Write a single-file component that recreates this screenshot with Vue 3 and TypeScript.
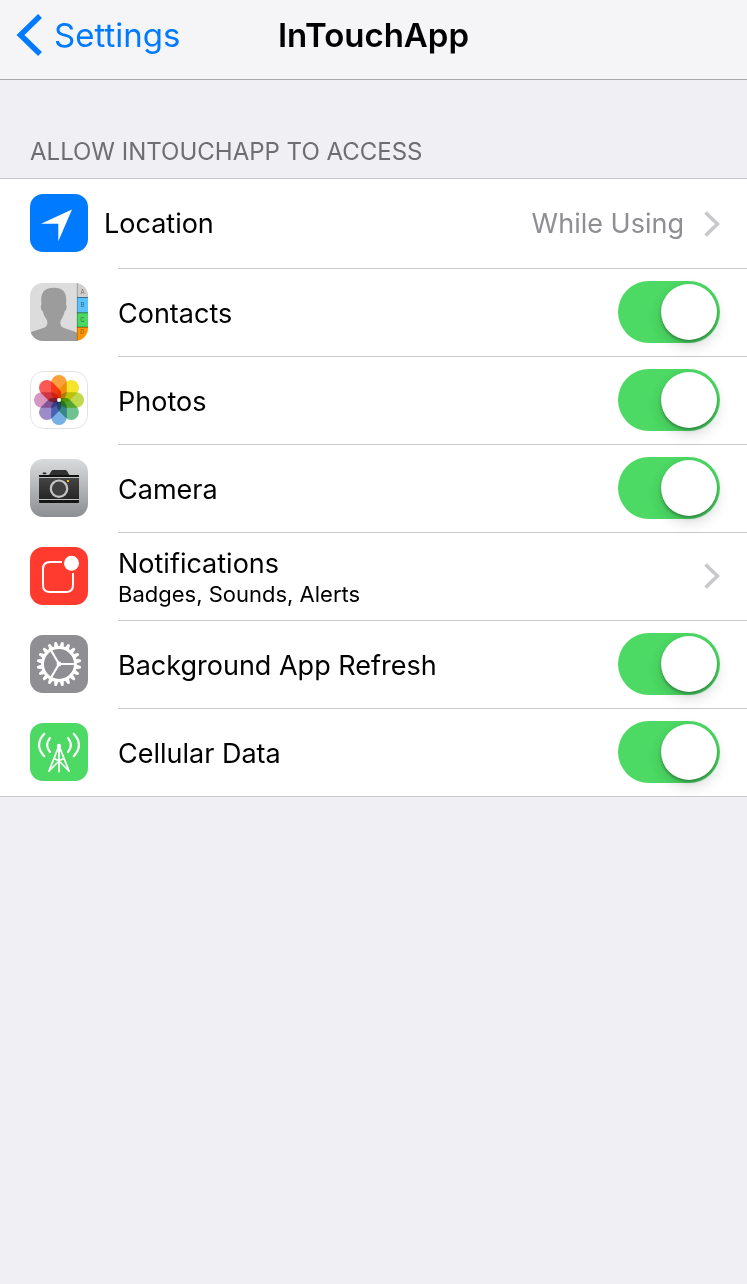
<script setup lang="ts">
import { reactive } from 'vue'

type IconName = 'location' | 'contacts' | 'photos' | 'camera' | 'notifications' | 'refresh' | 'cellular'

interface Row {
  id: IconName
  label: string
  kind: 'link' | 'toggle'
  detail?: string
  value?: string
  on?: boolean
}

const rows = reactive<Row[]>([
  { id: 'location', label: 'Location', kind: 'link', value: 'While Using' },
  { id: 'contacts', label: 'Contacts', kind: 'toggle', on: true },
  { id: 'photos', label: 'Photos', kind: 'toggle', on: true },
  { id: 'camera', label: 'Camera', kind: 'toggle', on: true },
  { id: 'notifications', label: 'Notifications', kind: 'link', detail: 'Badges, Sounds, Alerts' },
  { id: 'refresh', label: 'Background App Refresh', kind: 'toggle', on: true },
  { id: 'cellular', label: 'Cellular Data', kind: 'toggle', on: true },
])

const petals: string[] = ['#fba03c', '#f4e52a', '#bfd94e', '#6fc391', '#76b0e4', '#9c8cc8', '#d596c2', '#fb5a54']
const teeth: number[] = Array.from({ length: 20 }, (_, i) => i * 18 + 9)
</script>

<template>
  <div class="screen">
    <header class="nav">
      <a class="back" href="#settings">
        <svg class="back-arrow" viewBox="0 0 26 42" aria-hidden="true">
          <path d="M24 2 4.500 21 24 40" fill="none" stroke="currentColor" stroke-width="5.500" />
        </svg>
        <span>Settings</span>
      </a>
      <h1 class="title">InTouchApp</h1>
    </header>

    <main>
      <h2 class="section-title">ALLOW INTOUCHAPP TO ACCESS</h2>
      <ul class="list">
        <li v-for="row in rows" :key="row.id" class="row" :class="[row.id, row.kind]">
          <component
            :is="row.kind === 'link' ? 'a' : 'label'"
            class="row-inner"
            :href="row.kind === 'link' ? '#' + row.id : undefined"
            :for="row.kind === 'toggle' ? 'switch-' + row.id : undefined"
          >
            <svg class="icon" viewBox="0 0 58 58" aria-hidden="true">
              <g v-if="row.id === 'location'">
                <rect width="58" height="58" fill="#007aff" />
                <path d="M42 15.500 11 29.800H28.300V47.300Z" fill="#fff" />
              </g>

              <g v-else-if="row.id === 'contacts'">
                <rect width="58" height="58" fill="#dcdcdc" />
                <path
                  d="M0 58V50C3 47.500 13 46 16 43.500 18 41.500 17.800 38 16 35.500 14 33 13.500 31 13 28.500 11 27.500 10.200 23 11.500 21.500 10 10 14 4.700 23.800 4.700S37.500 10 36 21.500C37.300 23 36.500 27.500 34.500 28.500 34 31 33.500 33 31.800 35.500 30 38 29.800 41.500 31.500 43.500 34.500 46 44 47.500 47 50V58Z"
                  fill="#9c9c9c"
                />
                <rect x="47" width="11" height="14" fill="#d0cfcd" />
                <rect x="47" y="14" width="11" height="16" fill="#5ac1fa" />
                <rect x="47" y="29.500" width="11" height="15" fill="#4cd664" />
                <rect x="47" y="44" width="11" height="14" fill="#ff9500" />
                <path d="M47 14.500H58M47 29.800H58M47 44.200H58" stroke="#000" stroke-opacity=".4" />
                <path d="M47.300 0V58" stroke="#000" stroke-opacity=".25" />
                <g class="tab-letters">
                  <text x="52.500" y="11">A</text>
                  <text x="52.500" y="24">B</text>
                  <text x="52.500" y="39">C</text>
                  <text x="52.500" y="51">D</text>
                </g>
              </g>

              <g v-else-if="row.id === 'photos'">
                <rect width="58" height="58" fill="#fff" />
                <g class="flower">
                  <rect
                    v-for="(color, i) in petals"
                    :key="color"
                    class="petal"
                    x="21.200"
                    y="4"
                    width="15.600"
                    height="25"
                    rx="7.800"
                    :fill="color"
                    :transform="`rotate(${i * 45} 29 29)`"
                  />
                </g>
                <circle cx="29" cy="29" r="2" fill="#fff" />
                <rect x=".5" y=".5" width="57" height="57" rx="13" fill="none" stroke="#e2e2e2" />
              </g>

              <g v-else-if="row.id === 'camera'">
                <defs>
                  <linearGradient id="camera-back" x1="0" y1="0" x2="0" y2="1">
                    <stop offset="0" stop-color="#dadbdc" />
                    <stop offset="1" stop-color="#8c8e93" />
                  </linearGradient>
                  <linearGradient id="camera-body" x1="0" y1="0" x2="0" y2="1">
                    <stop offset="0" stop-color="#444" />
                    <stop offset="1" stop-color="#262626" />
                  </linearGradient>
                </defs>
                <rect width="58" height="58" fill="url(#camera-back)" />
                <path d="M9 18V17Q9 16 10 16H18.500C20.500 15.500 20.500 11.500 23 11H35.500C38 11.500 38 15.500 40 16H48Q49 16 49 17V18Z" fill="#303030" />
                <path d="M13 14.700V14H16V14.700Z" fill="#222" stroke="#222" />
                <rect x="9" y="16" width="40" height="2" fill="#111" />
                <rect x="9" y="19" width="40" height="21" fill="url(#camera-body)" />
                <path d="M9 18.500H49M9 40.500H49" stroke="#c4c6c6" />
                <path d="M9 41H49V43Q49 44 48 44H10Q9 44 9 43Z" fill="#161616" />
                <circle cx="29" cy="29.700" r="8.200" fill="#404040" stroke="#c4c5c7" stroke-width="2.200" />
                <rect x="37" y="21" width="2" height="2" fill="#f4b90c" />
              </g>

              <g v-else-if="row.id === 'notifications'">
                <rect width="58" height="58" fill="#ff3b30" />
                <path d="M32 15H20Q13 15 13 22V38Q13 45 20 45H36Q43 45 43 38V26" fill="none" stroke="#fff" stroke-width="2" />
                <circle cx="41.500" cy="16.300" r="7.500" fill="#fff" />
              </g>

              <g v-else-if="row.id === 'refresh'">
                <rect width="58" height="58" fill="#8e8e93" />
                <path
                  v-for="angle in teeth"
                  :key="angle"
                  d="M45.500 26.600 50.600 27.700Q51.300 28 51.300 29T50.600 30.300L45.500 31.400Z"
                  fill="#fff"
                  :transform="`rotate(${angle} 29 29)`"
                />
                <circle cx="29" cy="29" r="16.500" fill="none" stroke="#fff" stroke-width="3" />
                <path d="M29 29H45.500M29 29 20.700 14.700M29 29 20.700 43.300" stroke="#fff" stroke-width="2.200" />
                <circle cx="29" cy="29" r="2.400" fill="#fff" />
              </g>

              <g v-else>
                <rect width="58" height="58" fill="#4cd964" />
                <g fill="none" stroke="#fff" stroke-linecap="round" stroke-linejoin="round">
                  <path
                    d="M14.300 10.800Q3.800 22 14.300 33.200M43.700 10.800Q54.200 22 43.700 33.200M20 15Q14.200 22 20 29M38 15Q43.800 22 38 29"
                    stroke-width="2.200"
                  />
                  <path d="M28.500 24 19 48M29.500 24 39 48M29 24V48.500" stroke-width="1.800" />
                  <path d="M24.500 35.500 29 38 39 48M33.500 35.500 29 38 19 48" stroke-width="1.500" />
                </g>
                <circle cx="29" cy="23" r="2.200" fill="#fff" />
              </g>
            </svg>

            <span class="body">
              <span class="text">
                <span class="label">{{ row.label }}</span>
                <span v-if="row.detail" class="detail">{{ row.detail }}</span>
              </span>
              <span v-if="row.value" class="value">{{ row.value }}</span>
              <svg v-if="row.kind === 'link'" class="chevron" viewBox="0 0 16 26" aria-hidden="true">
                <path d="M1.500 1.500 13.500 13 1.500 24.500" fill="none" stroke="#c7c7cc" stroke-width="3.500" />
              </svg>
              <input v-else :id="'switch-' + row.id" v-model="row.on" class="switch" type="checkbox" role="switch" />
            </span>
          </component>
        </li>
      </ul>
    </main>
  </div>
</template>

<style>
body {
  margin: 0;
  background: #efeff4;
}
</style>

<style scoped>
.screen {
  min-height: 100vh;
  background: #efeff4;
  color: #000;
  font-family: Inter, Roboto, "Liberation Sans", sans-serif;
}

.nav {
  display: grid;
  grid-template-columns: 1fr auto 1fr;
  align-items: center;
  box-sizing: border-box;
  height: 80px;
  padding: 0 16px 10px;
  border-bottom: 1px solid #a7a7aa;
  background: #f5f5f8;
}

.back {
  display: flex;
  align-items: center;
  gap: 12px;
  color: #007aff;
  font-size: 33px;
  line-height: 40px;
  text-decoration: none;
}

.back-arrow {
  width: 26px;
  height: 42px;
}

.title {
  margin: 0;
  font-size: 33px;
  font-weight: 600;
  line-height: 40px;
}

.section-title {
  margin: 0;
  padding: 56px 30px 10px;
  color: #6d6d72;
  font-size: 24px;
  font-weight: 400;
  line-height: 32px;
}

.list {
  margin: 0;
  padding: 0;
  border-top: 1px solid #c8c7cc;
  border-bottom: 1px solid #c8c7cc;
  background: #fff;
  list-style: none;
}

.row-inner {
  display: flex;
  align-items: stretch;
  gap: 30px;
  padding-left: 30px;
  color: inherit;
  text-decoration: none;
}

.location .row-inner {
  gap: 16px;
}

.icon {
  flex: none;
  width: 58px;
  height: 58px;
  margin-top: 14px;
  border-radius: 13px;
}

.location .icon {
  margin-top: 15px;
}

.body {
  display: flex;
  flex: 1;
  align-items: center;
  box-sizing: border-box;
  height: 88px;
  padding-right: 27px;
  padding-bottom: 2px;
  border-bottom: 1px solid #c8c7cc;
}

.location .body {
  height: 89px;
  padding-bottom: 0;
  border-bottom: 0;
}

.contacts .body {
  height: 89px;
  border-top: 1px solid #c8c7cc;
}

.contacts .icon {
  margin-top: 15px;
}

.row:last-child .body {
  height: 87px;
  border-bottom: 0;
}

.text {
  display: flex;
  flex: 1;
  flex-direction: column;
}

.toggle .text {
  padding-top: 4px;
}

.notifications .text {
  padding-top: 2px;
}

.label {
  font-size: 27px;
  line-height: 34px;
}

.detail {
  font-size: 22px;
  line-height: 26px;
}

.value {
  margin-right: 20px;
  color: #8e8e93;
  font-size: 27px;
  line-height: 34px;
}

.chevron {
  width: 16px;
  height: 26px;
}

.switch {
  display: flex;
  justify-content: flex-start;
  box-sizing: border-box;
  width: 102px;
  height: 62px;
  margin: 0;
  padding: 3px;
  border-radius: 31px;
  background: #e5e5ea;
  appearance: none;
}

.switch::before {
  width: 56px;
  height: 56px;
  border-radius: 50%;
  background: #fff;
  box-shadow: 0 6px 14px rgba(0, 0, 0, 0.16), 0 2px 3px rgba(0, 0, 0, 0.3);
  content: "";
}

.switch:checked {
  justify-content: flex-end;
  background: #4cd964;
}

.flower {
  isolation: isolate;
}

.petal {
  mix-blend-mode: multiply;
}

.tab-letters {
  fill: #000;
  fill-opacity: 0.5;
  font-size: 6px;
  text-anchor: middle;
}
</style>
